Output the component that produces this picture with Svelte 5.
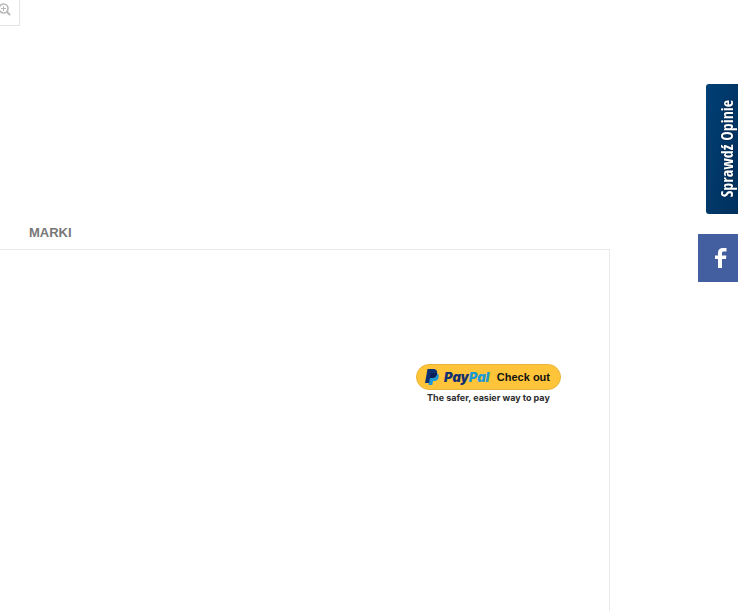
<script lang="ts">
  const tabs = [{ label: 'MARKI', href: '#marki' }];
</script>

<div class="page">
  <main class="content">
    <section class="gallery">
      <button class="zoom" type="button" aria-label="Powiększ">
        <svg viewBox="0 0 14 14" width="14" height="14" fill="none" stroke="currentColor">
          <circle cx="6.500" cy="5.500" r="4.500" stroke-width="1.700" />
          <path d="M6.500 3v5M4 5.500h5" stroke-width="1" />
          <path d="M10 9l2.500 2.500" stroke-width="2" stroke-linecap="round" />
        </svg>
      </button>
    </section>

    <nav class="tabs">
      {#each tabs as tab}
        <a href={tab.href}>{tab.label}</a>
      {/each}
    </nav>

    <section class="panel" id="marki">
      <div class="checkout">
        <button class="paypal" type="button">
          <svg class="paypal-mark" viewBox="0 0 14 16" width="14" height="16">
            <path fill="#1b9ad6" d="M5 4h7c2 1 2 3 1.500 5-.6 2-2 3-4.500 3H8l-.7 4H3.500z" />
            <path fill="#0b2f73" d="M2.500 0H8c3 0 4.700 1.500 4 4.500C11.400 7.600 9.500 9 6.500 9H5l-.9 5H0z" />
            <path fill="#081f57" d="M5.500 4h6.500c0 3-2 5-5.500 5H4.700z" />
          </svg>
          <span class="paypal-name">Pay<span class="pal">Pal</span></span>
          <span class="paypal-action">Check out</span>
        </button>
        <p class="note">The safer, easier way to pay</p>
      </div>
    </section>
  </main>

  <aside class="side-tabs">
    <a class="opinions" href="#opinie"><span>Sprawdź Opinie</span></a>
    <a class="facebook" href="#facebook" aria-label="Facebook">
      <svg viewBox="0 0 12 20" width="12" height="20">
        <path fill="#fff" d="M3 20v-9H0V7.500h3V5c0-3.300 1.800-5 5-5h3.500v3.500H9C7.500 3.500 7 4 7 5.300v2.200h4.400l-.5 3.500H7v9z" />
      </svg>
    </a>
  </aside>
</div>

<style>
  :global(body) {
    margin: 0;
    background: #fff;
    font-family: "Liberation Sans", Arial, sans-serif;
  }

  .page {
    display: flex;
    min-height: 100vh;
  }

  .content {
    flex: 1;
    display: flex;
    flex-direction: column;
    margin-right: 128px;
  }

  .gallery {
    height: 215px;
  }

  .zoom {
    display: flex;
    box-sizing: border-box;
    width: 20px;
    height: 26px;
    padding: 3px 0 0;
    border: solid #e5e5e5;
    border-width: 0 1px 1px 0;
    background: #fff;
    color: #b8b8b8;
  }

  .zoom svg {
    margin-left: -3px;
  }

  .tabs {
    display: flex;
    padding: 9px 29px 7px;
  }

  .tabs a {
    color: #777;
    font-size: 13px;
    font-weight: bold;
    line-height: 18px;
    text-decoration: none;
  }

  .panel {
    flex: 1;
    padding: 114px 48px 0;
    border: solid #e9e9e9;
    border-width: 1px 1px 0 0;
  }

  .checkout {
    display: flex;
    flex-direction: column;
    align-items: center;
    width: 145px;
    margin-left: auto;
  }

  .paypal {
    display: flex;
    align-items: center;
    box-sizing: border-box;
    width: 100%;
    height: 26px;
    padding: 0 10px 0 8px;
    border: 1px solid #e9b53a;
    border-radius: 13px;
    background: #ffc439;
    font-family: inherit;
    color: #111;
    white-space: nowrap;
  }

  .paypal-mark {
    flex: none;
  }

  .paypal-name {
    margin-left: 5px;
    color: #12306f;
    font-family: Inter, "Open Sans", sans-serif;
    font-size: 13px;
    font-style: italic;
    font-weight: 900;
  }

  .pal {
    color: #1b9ad6;
  }

  .paypal-action {
    margin-left: auto;
    font-size: 11px;
    font-weight: bold;
  }

  .note {
    margin: 2px 0 0;
    color: #2c2e2f;
    font-family: Inter, "Liberation Sans", sans-serif;
    font-size: 9px;
    font-weight: bold;
    line-height: 12px;
    white-space: nowrap;
  }

  .side-tabs {
    position: fixed;
    top: 84px;
    right: 0;
    display: flex;
    flex-direction: column;
    align-items: flex-end;
    gap: 20px;
  }

  .opinions {
    display: flex;
    align-items: center;
    justify-content: flex-end;
    box-sizing: border-box;
    width: 32px;
    height: 130px;
    border-radius: 3px 0 0 3px;
    background: linear-gradient(100deg, #003f75, #00305c);
    color: #fff;
    text-decoration: none;
  }

  .opinions span {
    writing-mode: vertical-rl;
    transform: rotate(180deg);
    font-family: "Open Sans Condensed", "Liberation Sans Narrow", "Open Sans", sans-serif;
    font-size: 16px;
    font-weight: bold;
    line-height: 22px;
    text-shadow: 0 0 2px #001a38;
    white-space: nowrap;
  }

  .facebook {
    display: flex;
    align-items: center;
    justify-content: center;
    box-sizing: border-box;
    width: 40px;
    height: 48px;
    padding-left: 6px;
    background: #435f9f;
  }
</style>
